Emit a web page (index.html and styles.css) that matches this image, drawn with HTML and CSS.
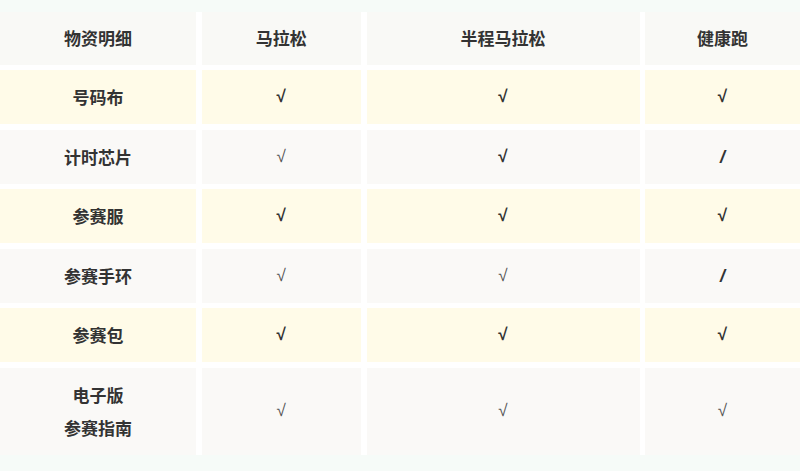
FILE: index.html
```html
<!DOCTYPE html>
<html lang="zh-CN">
<head>
<meta charset="utf-8">
<title>物资明细</title>
<link rel="stylesheet" href="styles.css">
</head>
<body>
<div class="page">
  <div class="table">
    <div class="cell head">物资明细</div>
    <div class="cell head">马拉松</div>
    <div class="cell head">半程马拉松</div>
    <div class="cell head">健康跑</div>

    <div class="cell yellow name">号码布</div>
    <div class="cell yellow mark bold">√</div>
    <div class="cell yellow mark bold">√</div>
    <div class="cell yellow mark bold">√</div>

    <div class="cell gray name">计时芯片</div>
    <div class="cell gray mark light">√</div>
    <div class="cell gray mark bold">√</div>
    <div class="cell gray mark bold slash">/</div>

    <div class="cell yellow name">参赛服</div>
    <div class="cell yellow mark bold">√</div>
    <div class="cell yellow mark bold">√</div>
    <div class="cell yellow mark bold">√</div>

    <div class="cell gray name">参赛手环</div>
    <div class="cell gray mark light">√</div>
    <div class="cell gray mark light">√</div>
    <div class="cell gray mark bold slash">/</div>

    <div class="cell yellow name">参赛包</div>
    <div class="cell yellow mark bold">√</div>
    <div class="cell yellow mark bold">√</div>
    <div class="cell yellow mark bold">√</div>

    <div class="cell gray name tall">电子版<br>参赛指南</div>
    <div class="cell gray mark light">√</div>
    <div class="cell gray mark light">√</div>
    <div class="cell gray mark light">√</div>
  </div>
</div>
</body>
</html>
```
FILE: styles.css
```css
html, body {
  margin: 0;
  padding: 0;
}
body {
  background: #f6fbf8;
  font-family: "Noto Sans CJK SC", "Noto Sans", sans-serif;
  color: #333;
  width: 800px;
  height: 471px;
  overflow: hidden;
}
.page {
  padding-top: 12px;
}
.table {
  display: grid;
  grid-template-columns: 196px 159.5px 273px 155px;
  grid-template-rows: 52.5px repeat(5, 54px) 87.5px;
  column-gap: 5.5px;
  row-gap: 5.5px;
  background: #ffffff;
}
.cell {
  display: flex;
  align-items: center;
  justify-content: center;
  text-align: center;
  font-size: 17px;
  font-weight: 700;
  line-height: 34px;
}
.head {
  background: #f9f9f6;
}
.yellow {
  background: #fffbe8;
}
.gray {
  background: #faf9f7;
}
.mark {
  font-family: "Liberation Sans", "DejaVu Sans", sans-serif;
  font-size: 17px;
}
.mark.bold {
  font-weight: 700;
  color: #333;
}
.mark.light {
  font-weight: 400;
  color: #555;
}
.mark.slash {
  font-size: 18px;
  font-style: italic;
}
.tall {
  line-height: 33px;
}
```
